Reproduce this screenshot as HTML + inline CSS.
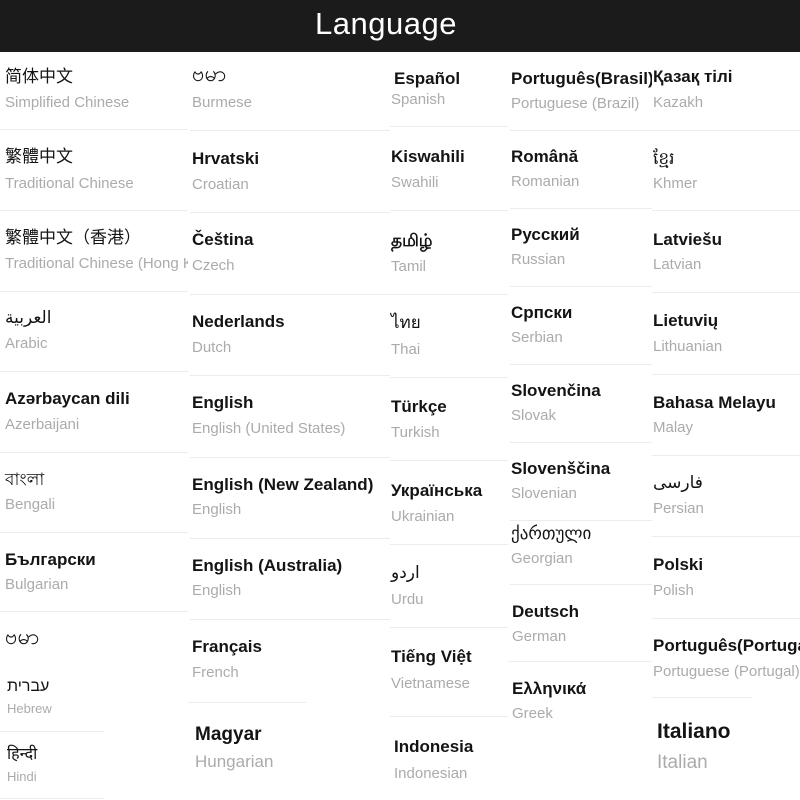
<!DOCTYPE html>
<html><head><meta charset="utf-8"><style>
body{margin:0;width:800px;height:800px;background:#fff;position:relative;overflow:hidden;font-family:"Liberation Sans","Noto Sans CJK SC","DejaVu Sans",sans-serif}
.h{position:absolute;left:0;top:0;width:772px;height:52px;background:#1b1b1b;color:#fff;font-size:31px;text-align:center;line-height:48px;letter-spacing:0.5px;padding-right:28px}
.c{position:absolute;top:52px;height:748px;overflow:hidden}
.t,.s{position:absolute;white-space:nowrap}
.t{font-size:17px;line-height:22px;font-weight:bold;color:#141414}
.s{font-size:15px;line-height:20px;color:#ababab}
.l{position:absolute;height:1px;background:#ececec}
.my{font-size:22px!important}
</style></head><body>
<div class="h">Language</div>

<div class="c" style="left:0;width:188px">
<div class="t" style="left:5px;top:14px;font-weight:normal">简体中文</div><div class="s" style="left:5px;top:41px">Simplified Chinese</div>
<div class="l" style="left:0;top:77px;width:188px"></div>
<div class="t" style="left:5px;top:94px;font-weight:normal">繁體中文</div><div class="s" style="left:5px;top:122px">Traditional Chinese</div>
<div class="l" style="left:0;top:158px;width:188px"></div>
<div class="t" style="left:5px;top:175px;font-weight:normal">繁體中文（香港）</div><div class="s" style="left:5px;top:202px">Traditional Chinese (Hong Kong)</div>
<div class="l" style="left:0;top:239px;width:188px"></div>
<div class="t" style="left:5px;top:255px;font-weight:normal">العربية</div><div class="s" style="left:5px;top:282px">Arabic</div>
<div class="l" style="left:0;top:319px;width:188px"></div>
<div class="t" style="left:5px;top:336px">Azərbaycan dili</div><div class="s" style="left:5px;top:363px">Azerbaijani</div>
<div class="l" style="left:0;top:400px;width:188px"></div>
<div class="t" style="left:5px;top:417px;font-weight:normal">বাংলা</div><div class="s" style="left:5px;top:443px">Bengali</div>
<div class="l" style="left:0;top:480px;width:188px"></div>
<div class="t" style="left:5px;top:497px">Български</div><div class="s" style="left:5px;top:523px">Bulgarian</div>
<div class="l" style="left:0;top:559px;width:188px"></div>
<div class="t my" style="left:5px;top:574px;font-weight:normal">ဗမာ</div>
<div class="t" style="left:7px;top:624px;font-weight:normal;font-size:16px">עברית</div><div class="s" style="left:7px;top:647px;font-size:13px">Hebrew</div>
<div class="l" style="left:0;top:679px;width:104px"></div>
<div class="t" style="left:7px;top:692px;font-weight:normal;font-size:16px">हिन्दी</div><div class="s" style="left:7px;top:715px;font-size:13px">Hindi</div>
<div class="l" style="left:0;top:746px;width:104px"></div>
</div>

<div class="c" style="left:188px;width:202px">
<div class="t my" style="left:4px;top:11px;font-weight:normal">ဗမာ</div><div class="s" style="left:4px;top:41px">Burmese</div>
<div class="l" style="left:2px;top:78px;width:200px"></div>
<div class="t" style="left:4px;top:96px">Hrvatski</div><div class="s" style="left:4px;top:123px">Croatian</div>
<div class="l" style="left:2px;top:160px;width:200px"></div>
<div class="t" style="left:4px;top:177px">Čeština</div><div class="s" style="left:4px;top:204px">Czech</div>
<div class="l" style="left:2px;top:242px;width:200px"></div>
<div class="t" style="left:4px;top:259px">Nederlands</div><div class="s" style="left:4px;top:286px">Dutch</div>
<div class="l" style="left:2px;top:323px;width:200px"></div>
<div class="t" style="left:4px;top:340px">English</div><div class="s" style="left:4px;top:367px">English (United States)</div>
<div class="l" style="left:2px;top:405px;width:200px"></div>
<div class="t" style="left:4px;top:422px">English (New Zealand)</div><div class="s" style="left:4px;top:448px">English</div>
<div class="l" style="left:2px;top:486px;width:200px"></div>
<div class="t" style="left:4px;top:503px">English (Australia)</div><div class="s" style="left:4px;top:529px">English</div>
<div class="l" style="left:2px;top:567px;width:200px"></div>
<div class="t" style="left:4px;top:584px">Français</div><div class="s" style="left:4px;top:611px">French</div>
<div class="l" style="left:0;top:650px;width:118px"></div>
<div class="t" style="left:7px;top:671px;font-size:19px;line-height:24px">Magyar</div><div class="s" style="left:7px;top:700px;font-size:17px">Hungarian</div>
</div>

<div class="c" style="left:390px;width:118px">
<div class="t" style="left:4px;top:16px">Español</div><div class="s" style="left:1px;top:38px">Spanish</div>
<div class="l" style="left:0;top:74px;width:118px"></div>
<div class="t" style="left:1px;top:94px">Kiswahili</div><div class="s" style="left:1px;top:121px">Swahili</div>
<div class="l" style="left:0;top:158px;width:118px"></div>
<div class="t" style="left:1px;top:178px">தமிழ்</div><div class="s" style="left:1px;top:205px">Tamil</div>
<div class="l" style="left:0;top:242px;width:118px"></div>
<div class="t" style="left:1px;top:260px;font-weight:normal">ไทย</div><div class="s" style="left:1px;top:288px">Thai</div>
<div class="l" style="left:0;top:325px;width:118px"></div>
<div class="t" style="left:1px;top:344px">Türkçe</div><div class="s" style="left:1px;top:371px">Turkish</div>
<div class="l" style="left:0;top:408px;width:118px"></div>
<div class="t" style="left:1px;top:428px">Українська</div><div class="s" style="left:1px;top:455px">Ukrainian</div>
<div class="l" style="left:0;top:492px;width:118px"></div>
<div class="t" style="left:1px;top:510px;font-weight:normal">اردو</div><div class="s" style="left:1px;top:538px">Urdu</div>
<div class="l" style="left:0;top:575px;width:118px"></div>
<div class="t" style="left:1px;top:594px">Tiếng Việt</div><div class="s" style="left:1px;top:622px">Vietnamese</div>
<div class="l" style="left:0;top:664px;width:118px"></div>
<div class="t" style="left:4px;top:684px">Indonesia</div><div class="s" style="left:4px;top:712px">Indonesian</div>
</div>

<div class="c" style="left:508px;width:144px">
<div class="t" style="left:3px;top:16px">Português(Brasil)</div><div class="s" style="left:3px;top:42px">Portuguese (Brazil)</div>
<div class="l" style="left:2px;top:78px;width:142px"></div>
<div class="t" style="left:3px;top:94px">Română</div><div class="s" style="left:3px;top:120px">Romanian</div>
<div class="l" style="left:2px;top:156px;width:142px"></div>
<div class="t" style="left:3px;top:172px">Русский</div><div class="s" style="left:3px;top:198px">Russian</div>
<div class="l" style="left:2px;top:234px;width:142px"></div>
<div class="t" style="left:3px;top:250px">Српски</div><div class="s" style="left:3px;top:276px">Serbian</div>
<div class="l" style="left:2px;top:312px;width:142px"></div>
<div class="t" style="left:3px;top:328px">Slovenčina</div><div class="s" style="left:3px;top:354px">Slovak</div>
<div class="l" style="left:2px;top:390px;width:142px"></div>
<div class="t" style="left:3px;top:406px">Slovenščina</div><div class="s" style="left:3px;top:432px">Slovenian</div>
<div class="l" style="left:2px;top:468px;width:142px"></div>
<div class="t" style="left:3px;top:471px;font-weight:normal">ქართული</div><div class="s" style="left:3px;top:497px">Georgian</div>
<div class="l" style="left:2px;top:532px;width:142px"></div>
<div class="t" style="left:4px;top:549px">Deutsch</div><div class="s" style="left:4px;top:575px">German</div>
<div class="l" style="left:0;top:609px;width:144px"></div>
<div class="t" style="left:4px;top:626px">Ελληνικά</div><div class="s" style="left:4px;top:652px">Greek</div>
</div>

<div class="c" style="left:652px;width:148px">
<div class="t" style="left:1px;top:14px">Қазақ тілі</div><div class="s" style="left:1px;top:41px">Kazakh</div>
<div class="l" style="left:0;top:78px;width:148px"></div>
<div class="t" style="left:1px;top:96px;font-weight:normal">ខ្មែរ</div><div class="s" style="left:1px;top:122px">Khmer</div>
<div class="l" style="left:0;top:158px;width:148px"></div>
<div class="t" style="left:1px;top:177px">Latviešu</div><div class="s" style="left:1px;top:203px">Latvian</div>
<div class="l" style="left:0;top:240px;width:148px"></div>
<div class="t" style="left:1px;top:258px">Lietuvių</div><div class="s" style="left:1px;top:285px">Lithuanian</div>
<div class="l" style="left:0;top:322px;width:148px"></div>
<div class="t" style="left:1px;top:340px">Bahasa Melayu</div><div class="s" style="left:1px;top:366px">Malay</div>
<div class="l" style="left:0;top:403px;width:148px"></div>
<div class="t" style="left:1px;top:420px;font-weight:normal">فارسی</div><div class="s" style="left:1px;top:447px">Persian</div>
<div class="l" style="left:0;top:484px;width:148px"></div>
<div class="t" style="left:1px;top:502px">Polski</div><div class="s" style="left:1px;top:529px">Polish</div>
<div class="l" style="left:0;top:566px;width:148px"></div>
<div class="t" style="left:1px;top:583px">Português(Portugal)</div><div class="s" style="left:1px;top:610px">Portuguese (Portugal)</div>
<div class="l" style="left:0;top:645px;width:100px"></div>
<div class="t" style="left:5px;top:667px;font-size:21px;line-height:26px">Italiano</div><div class="s" style="left:5px;top:700px;font-size:19px;line-height:22px">Italian</div>
</div>
</body></html>
